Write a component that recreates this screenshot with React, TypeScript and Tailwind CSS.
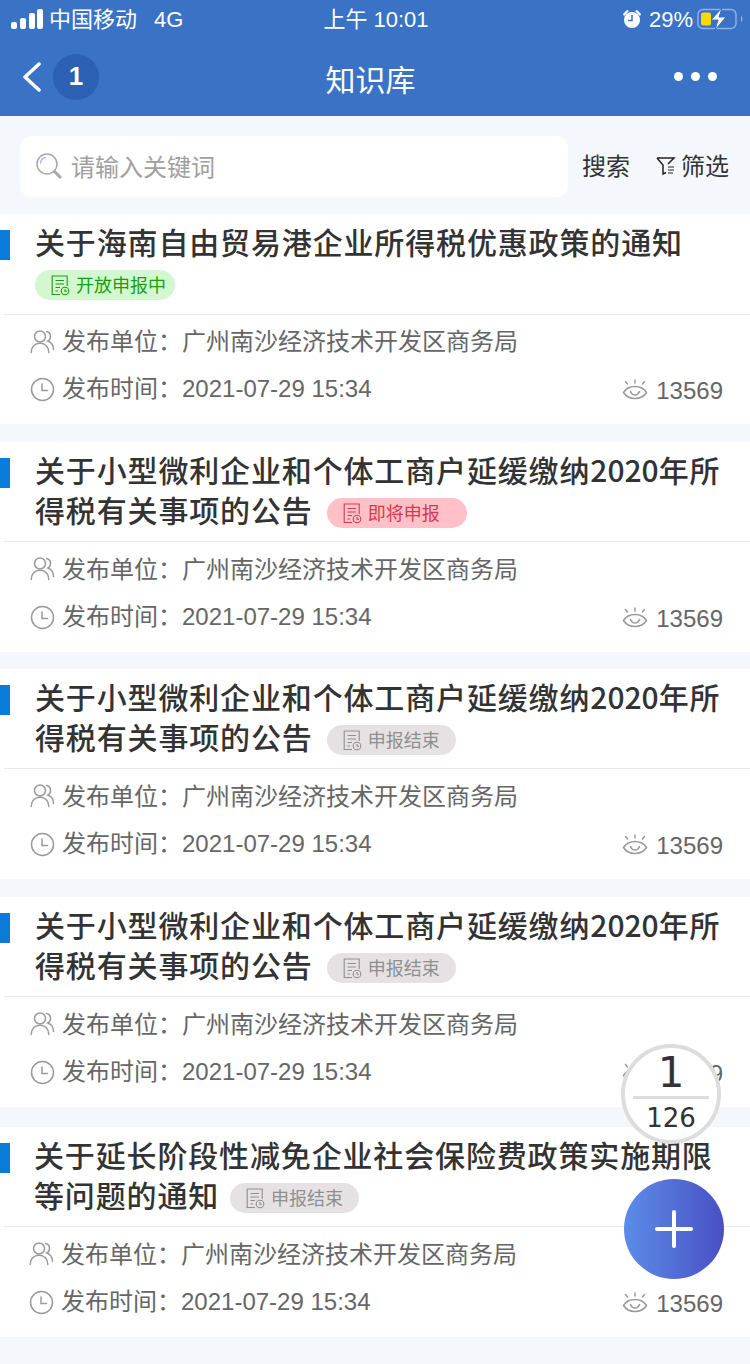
import React from "react";

const FONT = '"Liberation Sans", "Noto Sans CJK SC", sans-serif';
const TITLE_FONT = '"Noto Sans CJK SC", sans-serif';

type Tone = "green" | "red" | "gray";

const TONES: Record<Tone, { box: string; stroke: string }> = {
  green: { box: "w-[140px] bg-[#d3f8cf] text-[#16a00e]", stroke: "#16a00e" },
  red: { box: "w-[140px] bg-[#ffc0c8] text-[#d43a50]", stroke: "#d43a50" },
  gray: { box: "w-[129px] bg-[#e6e2e3] text-[#8f8f8f]", stroke: "#8f8f8f" },
};

function DocIcon({ color }: { color: string }) {
  return (
    <svg width="19" height="21" viewBox="0 0 19 21" fill="none" stroke={color} strokeWidth="1.1">
      <path d="M9 19.5H1.2V1h15v10" />
      <path d="M4.5 5.5h8.5M4.5 9h8.5M4.5 12.5h4.5M4.5 16h2.5" />
      <circle cx="14" cy="16" r="3.8" />
      <path d="M14 14v2.2h2" />
    </svg>
  );
}

function Tag({ tone, label }: { tone: Tone; label: string }) {
  const t = TONES[tone];
  return (
    <span className={`inline-flex h-[30px] items-center rounded-full pl-4 text-[18px] leading-none ${t.box}`}>
      <DocIcon color={t.stroke} />
      <span className="ml-[6px] pt-px">{label}</span>
    </span>
  );
}

function UserIcon() {
  return (
    <svg className="-mt-[2px]" width="25" height="25" viewBox="0 0 25 25" fill="none" stroke="#9a9a9a" strokeWidth="1.5" strokeLinecap="round">
      <circle cx="10" cy="7.5" r="5.5" />
      <path d="M1.2 23.5c0-5.5 3.5-9.2 8.8-9.2s8.8 3.7 8.8 9.2" />
      <path d="M16.5 2.6c2.5.5 4 2.4 4 4.9 0 2-1 3.6-2.6 4.5 3.4 1.2 5.6 4.6 5.6 8.5" />
    </svg>
  );
}

function ClockIcon() {
  return (
    <svg width="25" height="25" viewBox="0 0 25 25" fill="none" stroke="#9a9a9a" strokeWidth="1.5" strokeLinecap="round">
      <circle cx="12.5" cy="12.5" r="11" />
      <path d="M12 7v6.5h5.5" />
    </svg>
  );
}

function EyeIcon() {
  return (
    <svg className="-mt-[3px]" width="26" height="21" viewBox="0 0 26 21" fill="none" stroke="#9a9a9a" strokeWidth="1.5" strokeLinecap="round">
      <path d="M1.5 13.5C4 9.5 8 7.5 13 7.5s9 2 11.5 6C22 17.5 18 19.5 13 19.5S4 17.5 1.5 13.5z" />
      <path d="M8.5 12.5c1 2.5 2.5 3.5 4.5 3.5s3.500-1 4.500-3.500" />
      <path d="M13 1v3M3.500 2.500l2 2.500M22.500 2.500l-2 2.500" />
    </svg>
  );
}

function Card({
  mt,
  first,
  rest,
  tone,
  label,
  shift = 0,
}: {
  mt: string;
  first: React.ReactNode;
  rest?: string;
  tone: Tone;
  label: string;
  shift?: number;
}) {
  return (
    <section className={`relative h-[210px] bg-white ${mt}`}>
      <div className="absolute left-0 top-[16px] h-[30px] w-[10px] bg-[#0a7bd8]" />
      <div className={`flex flex-col pt-[7px] ${shift ? "pl-[34px]" : "pl-[35px]"} ${rest ? "h-[99px]" : "h-[100px]"}`}>
        <h2 className="whitespace-nowrap text-[30px] font-medium leading-[41px] tracking-[0.85px] text-[#333333]" style={{ fontFamily: TITLE_FONT }}>
          {first}
        </h2>
        {rest ? (
          <div className="flex items-start">
            <span className="text-[30px] font-medium leading-[38px] tracking-[0.85px] text-[#333333]" style={{ fontFamily: TITLE_FONT }}>
              {rest}
            </span>
            <span className={`mt-[8px] flex ${shift ? "ml-[11px]" : "ml-[14px]"}`}>
              <Tag tone={tone} label={label} />
            </span>
          </div>
        ) : (
          <div className="mt-[8px] flex">
            <Tag tone={tone} label={label} />
          </div>
        )}
      </div>
      <div className="ml-[4px] border-t border-[#e9e9ec]" />
      <div className={`flex items-center text-[24px] text-[#666666] ${shift ? "pl-[29px]" : "pl-[30px]"} ${rest ? "h-[55px]" : "h-[54px]"}`}>
        <UserIcon />
        <span className="ml-[7px]">{"发布单位\uFF1A广州南沙经济技术开发区商务局"}</span>
      </div>
      <div className={`flex h-[40px] items-center justify-between pr-[27px] text-[24px] text-[#666666] ${shift ? "pl-[29px]" : "pl-[30px]"}`}>
        <div className="flex items-center">
          <ClockIcon />
          <span className="ml-[7px]">{"发布时间\uFF1A2021-07-29 15:34"}</span>
        </div>
        <div className="mt-1 flex items-center">
          <EyeIcon />
          <span className="ml-2">13569</span>
        </div>
      </div>
    </section>
  );
}

const LONG_A = (
  <>
    关于小型微利企业和个体工商户延缓缴纳<span className="tracking-normal">2020</span>年所
  </>
);
const LONG_B = "得税有关事项的公告";

export default function App() {
  return (
    <div className="relative h-[1364px] w-[750px] overflow-hidden bg-[#f4f7fb]" style={{ fontFamily: FONT }}>
      <header className="h-[116px] bg-[#3a72c5] text-white">
        <div className="flex h-[38px] items-center justify-between pl-[11px] pr-[7px] text-[22px]">
          <div className="flex w-[262px] items-center">
            <svg width="32" height="20" viewBox="0 0 32 20" fill="white">
              <rect x="0" y="13" width="6" height="7" rx="2" />
              <rect x="9" y="9" width="6" height="11" rx="2" />
              <rect x="18" y="4" width="6" height="16" rx="2" />
              <rect x="26" y="0" width="6" height="20" rx="2" />
            </svg>
            <span className="ml-[6px]">中国移动</span>
            <span className="ml-[17px]">4G</span>
          </div>
          <span>上午 10:01</span>
          <div className="flex w-[264px] items-center justify-end">
            <svg width="20" height="20" viewBox="0 0 20 20" fill="white">
              <circle cx="10" cy="11" r="8" />
              <path d="M1 5l4-4 2 1-5 5zM19 5l-4-4-2 1 5 5z" />
              <path d="M10 6v5.500H6" stroke="#3a72c5" strokeWidth="1.500" fill="none" />
            </svg>
            <span className="ml-[7px]">29%</span>
            <svg className="ml-[4px]" width="46" height="22" viewBox="0 0 46 22">
              <rect x="1" y="1.500" width="38" height="19" rx="5" fill="none" stroke="#8fb0e2" strokeWidth="1.500" />
              <rect x="4" y="4.500" width="10" height="13" rx="2" fill="#ffd60a" />
              <path d="M44 8v6c1-.5 1.500-1.500 1.500-3s-.5-2.500-1.500-3z" fill="#8fb0e2" />
              <path d="M25 0L14 12h7l-3 10 11-13h-7z" fill="white" stroke="#3a72c5" strokeWidth="1" />
            </svg>
          </div>
        </div>
        <div className="relative flex h-[78px] items-center justify-between pb-[1px] pl-[23px] pr-[33px]">
          <div className="flex items-center">
            <svg width="18" height="30" viewBox="0 0 18 30" fill="none" stroke="white" strokeWidth="3.500" strokeLinecap="round" strokeLinejoin="round">
              <path d="M16 2L2 15l14 13" />
            </svg>
            <div className="ml-[12px] flex h-[46px] w-[46px] items-center justify-center rounded-full bg-[#2b60b3] text-[26px] font-bold">1</div>
          </div>
          <h1 className="absolute left-0 right-[9px] top-[28px] text-center text-[30px] leading-none">知识库</h1>
          <div className="flex gap-[8px]">
            <span className="h-[9px] w-[9px] rounded-full bg-white" />
            <span className="h-[9px] w-[9px] rounded-full bg-white" />
            <span className="h-[9px] w-[9px] rounded-full bg-white" />
          </div>
        </div>
      </header>

      <div className="flex h-[98px] items-start pl-[20px] pt-[20px] text-[24px] leading-[61px] text-[#333333]">
        <div className="flex h-[61px] w-[548px] items-center rounded-[12px] bg-white pl-[16px]">
          <svg width="26" height="27" viewBox="0 0 26 27" fill="none" stroke="#a8a8a8" strokeWidth="1.500">
            <circle cx="11" cy="11" r="10" />
            <path d="M4.500 10c.3-3 2.300-5 5-5.500" stroke="#b5b5f0" strokeLinecap="round" />
            <path d="M18 18l7 7" strokeWidth="3" />
          </svg>
          <span className="ml-[9px] pt-[2px] text-[#a0a0a0]">请输入关键词</span>
        </div>
        <span className="ml-[14px]">搜索</span>
        <svg className="ml-[26px] mt-[20px]" width="20" height="20" viewBox="0 0 20 20" fill="none" stroke="#222222" strokeWidth="1.500">
          <path d="M1 2h17l-6 6M1 2l6 7v9l3-1.500" />
          <path d="M12 11h6M12 14h6M12 17h5" strokeWidth="1" />
        </svg>
        <span className="ml-[5px]">筛选</span>
      </div>

      <Card mt="" first="关于海南自由贸易港企业所得税优惠政策的通知" tone="green" label="开放申报中" />
      <Card mt="mt-[18px]" first={LONG_A} rest={LONG_B} tone="red" label="即将申报" />
      <Card mt="mt-[17px]" first={LONG_A} rest={LONG_B} tone="gray" label="申报结束" />
      <Card mt="mt-[18px]" first={LONG_A} rest={LONG_B} tone="gray" label="申报结束" />
      <Card mt="mt-[20px]" first="关于延长阶段性减免企业社会保险费政策实施期限" rest="等问题的通知" tone="gray" label="申报结束" shift={1} />

      <div className="absolute left-[621px] top-[1044px] flex h-[100px] w-[100px] flex-col items-center rounded-full border-[4px] border-[#dddddd] bg-white text-[#333333]" style={{ fontFamily: '"DejaVu Sans", sans-serif' }}>
        <span className="mt-[3px] h-[44px] text-[42px] font-medium leading-[44px]">1</span>
        <div className="mt-[1px] h-[3px] w-[76px] bg-[#dddddd]" />
        <span className="text-[26px] leading-[38px]">126</span>
      </div>
      <div className="absolute left-[624px] top-[1179px] flex h-[100px] w-[100px] items-center justify-center rounded-full bg-gradient-to-r from-[#5b8de8] to-[#4a4fc4]">
        <svg width="38" height="38" viewBox="0 0 38 38" stroke="white" strokeWidth="4" strokeLinecap="round">
          <path d="M19 2v34M2 19h34" />
        </svg>
      </div>
    </div>
  );
}
